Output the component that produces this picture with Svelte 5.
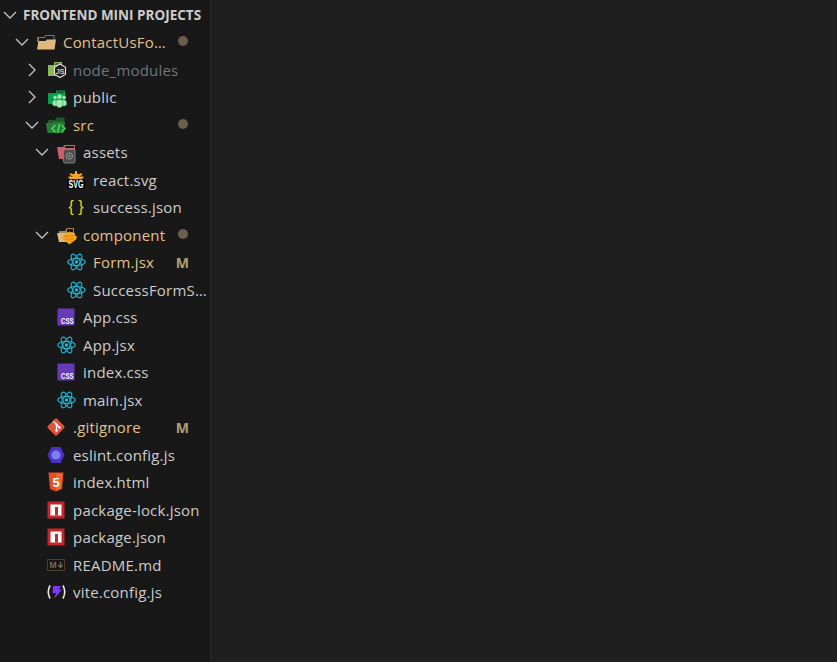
<script>
  const rows = [
    { name: "node_modules", depth: 2, open: false, icon: "node", dim: true },
    { name: "public", depth: 2, open: false, icon: "public" },
    { name: "src", depth: 2, open: true, icon: "src", mod: true, dot: true },
    { name: "assets", depth: 3, open: true, icon: "assets" },
    { name: "react.svg", depth: 4, icon: "svg" },
    { name: "success.json", depth: 4, icon: "json" },
    { name: "component", depth: 3, open: true, icon: "component", mod: true, dot: true },
    { name: "Form.jsx", depth: 4, icon: "react", mod: true, badge: "M" },
    { name: "SuccessFormSubmit.jsx", depth: 4, icon: "react" },
    { name: "App.css", depth: 3, icon: "css" },
    { name: "App.jsx", depth: 3, icon: "react" },
    { name: "index.css", depth: 3, icon: "css" },
    { name: "main.jsx", depth: 3, icon: "react" },
    { name: ".gitignore", depth: 2, icon: "git", mod: true, badge: "M" },
    { name: "eslint.config.js", depth: 2, icon: "eslint" },
    { name: "index.html", depth: 2, icon: "html" },
    { name: "package-lock.json", depth: 2, icon: "npm" },
    { name: "package.json", depth: 2, icon: "npm" },
    { name: "README.md", depth: 2, icon: "md" },
    { name: "vite.config.js", depth: 2, icon: "vite" },
  ];
</script>

{#snippet chevron(open)}
  <svg class="chev" width="16" height="16" viewBox="0 0 16 16" fill="none" stroke="#c5c5c5" stroke-width="1.300">
    {#if open}
      <path d="M2 5 8 11l6-6" />
    {:else}
      <path d="M5 2l6 6-6 6" />
    {/if}
  </svg>
{/snippet}

{#snippet icon(kind)}
  {#if kind === "root"}
    <svg width="22" height="22" viewBox="1 0 22 22">
      <path d="M3 6h7l1.500-2H20.500v7H3z" fill="#8d7350" />
      <path d="M11.500 5H19.500v6H11z" fill="#181818" />
      <path d="M5 7h6l1-1h7v5H5z" fill="#181818" />
      <path d="M4.500 10h7l1.500-1.500h9L20.500 18.500H3z" fill="#e0b781" />
    </svg>
  {:else if kind === "node"}
    <svg width="22" height="22" viewBox="1 0 22 22">
      <path d="M4 6h6V3h8v14H4z" fill="#8cb855" />
      <path d="M11 4h6v2h-6z" fill="#4d6b2f" />
      <path d="M16 5 21.500 8.200v7.100L16 18.500l-5.500-3.200V8.200z" fill="#1c1c1c" stroke="#e6e6e6" stroke-width="1.100" />
      <text x="16" y="14.800" class="tiny" fill="#c8c8c8" text-anchor="middle" font-size="7.500">JS</text>
    </svg>
  {:else if kind === "public"}
    <svg width="22" height="22" viewBox="1 0 22 22">
      <path d="M4 7h8V4.500h9V18H4z" fill="#0a9e4a" />
      <path d="M13 5.500h7V7h-7z" fill="#0a5f31" />
      <g fill="#a6e8b4" stroke="#0a9e4a" stroke-width="0.500">
        <circle cx="11" cy="11.500" r="2" />
        <circle cx="20" cy="11.500" r="2" />
        <path d="M8.500 19v-3q0-2 2.500-2h9q2.500 0 2.500 2v3l-2 1H10.500z" />
        <circle cx="15.500" cy="10.500" r="2.500" />
        <path d="M12 19v-3q0-2.500 3.500-2.500T19 16v3l-2 2.500h-3z" />
      </g>
    </svg>
  {:else if kind === "src"}
    <svg width="22" height="22" viewBox="1 0 22 22">
      <path d="M4 6h7l1.500-2.500H20.500V9H4z" fill="#1f5a2a" />
      <path d="M2 9h7l1-1h11l-1.500 11H3.500z" fill="#2a7a38" />
      <g fill="none" stroke="#3fe05a" stroke-width="1.500">
        <path d="M11.500 11 8 14.500l3.500 3.500M17.500 11l3.500 3.500-3.500 3.500M15.500 10 13.500 19" />
      </g>
    </svg>
  {:else if kind === "assets"}
    <svg width="22" height="22" viewBox="1 0 22 22">
      <path d="M3 6h6l1.500-2H21v14H5z" fill="#c9606c" />
      <path d="M11 5h9v2h-9z" fill="#181818" />
      <rect x="9.500" y="8.500" width="11.500" height="13.500" rx="1.500" fill="#4d4d4d" stroke="#7f7f7f" />
      <circle cx="15.250" cy="15" r="3" fill="none" stroke="#a9a9a9" stroke-width="1.300" stroke-dasharray="1.400 0.800" />
      <circle cx="15.250" cy="15" r="0.900" fill="#a9a9a9" />
    </svg>
  {:else if kind === "component"}
    <svg width="22" height="22" viewBox="1 0 22 22">
      <path d="M5 7h6l1.500-3H20v5H5z" fill="#a48659" />
      <path d="M13 5h6v3h-6z" fill="#181818" />
      <path d="M3 9h18l-2 9H5z" fill="#e0b781" />
      <path d="M15.500 7.500 23 12.500l-1 3-6.500 5-6.500-5-1-3z" fill="#f5a11e" />
      <path d="M10 12h11M11 15h9" stroke="#d9840f" stroke-width="0.900" />
    </svg>
  {:else if kind === "svg"}
    <svg width="22" height="22" viewBox="0 0 22 22">
      <g stroke="#f7a32b" stroke-width="2">
        <path d="M11 2v8M5 5l12 5M17 5 5 10M3.500 8.500h15" />
      </g>
      <circle cx="11" cy="7.500" r="3.200" fill="#f7a32b" />
      <rect x="2.500" y="10.500" width="17" height="9.500" rx="1.500" fill="#000" />
      <text x="3.500" y="18.800" class="tiny" fill="#fff" font-size="10.500" textLength="15" lengthAdjust="spacingAndGlyphs">SVG</text>
    </svg>
  {:else if kind === "json"}
    <span class="braces">{"{ }"}</span>
  {:else if kind === "react"}
    <svg width="19" height="18" viewBox="0 0 19 18" fill="none" stroke="#1ab8d6" stroke-width="1.150">
      <ellipse cx="9.500" cy="9" rx="8.800" ry="3.500" />
      <ellipse cx="9.500" cy="9" rx="8.800" ry="3.500" transform="rotate(60 9.500 9)" />
      <ellipse cx="9.500" cy="9" rx="8.800" ry="3.500" transform="rotate(120 9.500 9)" />
      <circle cx="9.500" cy="9" r="1.800" fill="#1ab8d6" stroke="none" />
    </svg>
  {:else if kind === "css"}
    <svg width="18" height="18" viewBox="0 0 18 18">
      <rect x="0.500" y="0.500" width="17" height="17" rx="1" fill="#673ab7" />
      <text x="4" y="16" class="tiny" fill="#fff" font-size="8.500" textLength="12.500" lengthAdjust="spacingAndGlyphs">CSS</text>
    </svg>
  {:else if kind === "git"}
    <svg width="18" height="18" viewBox="0 0 18 18">
      <rect x="2.500" y="2.500" width="13" height="13" rx="1.500" fill="#e0533b" transform="rotate(45 9 9)" />
      <path d="M6.500 3.500 9.500 6.500v6M9.500 6.500l3 3" stroke="#fff" stroke-width="1.200" fill="none" />
      <circle cx="9.500" cy="6.500" r="1.200" fill="#fff" />
      <circle cx="9.500" cy="12.500" r="1.200" fill="#fff" />
      <circle cx="12.500" cy="9.500" r="1.200" fill="#fff" />
    </svg>
  {:else if kind === "eslint"}
    <svg width="18" height="18" viewBox="0 0 18 18">
      <path d="M0.500 9 4.500 1h9l4 8-4 8h-9z" fill="#4b32c3" />
      <circle cx="9" cy="9" r="4.600" fill="#8080f2" />
    </svg>
  {:else if kind === "html"}
    <svg width="18" height="20" viewBox="0 0 18 20">
      <path d="M1.500 0.500h15L15 17 9 19.500 3 17z" fill="#e44d26" />
      <path d="M9 1.500h6.500L14.200 16.200 9 18.300z" fill="#f16529" />
      <text x="9" y="14.500" class="tiny" fill="#fff" text-anchor="middle" font-size="13">5</text>
    </svg>
  {:else if kind === "npm"}
    <svg width="18" height="18" viewBox="0 0 18 18">
      <rect x="0.500" y="0.500" width="17" height="17" fill="#c5262b" />
      <rect x="3.500" y="3.500" width="11" height="11" fill="#fff" />
      <rect x="8" y="6" width="3" height="8.500" fill="#c5262b" />
    </svg>
  {:else if kind === "md"}
    <svg width="18" height="12" viewBox="0 0 18 12">
      <rect x="0.500" y="0.500" width="17" height="11" fill="none" stroke="#4a3d2c" />
      <text x="2.500" y="9.300" class="tiny" fill="#7d6a4d" font-size="8.500">M</text>
      <path d="M13.500 3v4.500M11.500 6l2 2.500 2-2.500" stroke="#7d6a4d" stroke-width="1.300" fill="none" />
    </svg>
  {:else if kind === "vite"}
    <svg width="21" height="18" viewBox="0 0 21 18">
      <path d="M4 2.500Q0.500 9 4 15.500M17 2.500Q20.500 9 17 15.500" fill="none" stroke="#e8e8e8" stroke-width="1.600" />
      <path d="M7 3h8l-2 3.500h3L8.500 15.500 10 10H6.500z" fill="#7c3aed" />
    </svg>
  {/if}
{/snippet}

<div class="window">
  <aside class="explorer">
    <header class="section">
      {@render chevron(true)}
      <span class="section-title">FRONTEND MINI PROJECTS</span>
    </header>

    <div class="row" style="--depth: 1">
      <span class="twistie">{@render chevron(true)}</span>
      <span class="icon">{@render icon("root")}</span>
      <span class="label mod">ContactUsFormSubmit</span>
      <span class="dot"></span>
    </div>

    {#each rows as row}
      <div class="row" style="--depth: {row.depth}">
        <span class="twistie">
          {#if row.open !== undefined}{@render chevron(row.open)}{/if}
        </span>
        <span class="icon">{@render icon(row.icon)}</span>
        <span class="label" class:mod={row.mod} class:dim={row.dim}>{row.name}</span>
        {#if row.dot}<span class="dot"></span>{/if}
        {#if row.badge}<span class="badge">{row.badge}</span>{/if}
      </div>
    {/each}
  </aside>
  <main class="editor"></main>
</div>

<style>
  :global(body) {
    margin: 0;
    background: #1f1f1f;
  }

  .window {
    display: flex;
    height: 662px;
    font-family: "Open Sans", "Noto Sans", sans-serif;
  }

  .explorer {
    width: 210px;
    flex-shrink: 0;
    background: #181818;
    border-right: 1px solid #2b2b2b;
    overflow: hidden;
  }

  .editor {
    flex: 1;
    background: #1f1f1f;
  }

  .section {
    display: flex;
    align-items: center;
    height: 28.500px;
    padding: 1px 0 0 2px;
    gap: 5px;
    box-sizing: border-box;
  }

  .section-title {
    font-size: 13.500px;
    font-weight: 700;
    color: #cccccc;
    white-space: nowrap;
  }

  .row {
    display: flex;
    align-items: center;
    height: 27.500px;
    padding-left: calc(3px + var(--depth) * 10px);
  }

  .twistie {
    width: 18px;
    flex-shrink: 0;
    display: flex;
    justify-content: center;
  }

  .chev {
    display: block;
  }

  .icon {
    width: 30px;
    margin-right: 2px;
    flex-shrink: 0;
    display: flex;
    justify-content: center;
    align-items: center;
  }

  .icon svg {
    display: block;
    overflow: visible;
  }

  .braces {
    color: #e8d21d;
    font-size: 16px;
    font-family: "Liberation Sans", sans-serif;
    line-height: 18px;
    white-space: pre;
  }

  .tiny {
    font-family: "Liberation Sans", sans-serif;
    font-weight: 700;
  }

  .label {
    flex: 1;
    min-width: 0;
    font-size: 15px;
    letter-spacing: 0.200px;
    color: #cccccc;
    white-space: nowrap;
    overflow: hidden;
    text-overflow: ellipsis;
  }

  .label.mod {
    color: #e2c08d;
  }

  .label.dim {
    color: #6e7681;
  }

  .dot {
    width: 10px;
    height: 10px;
    border-radius: 50%;
    background: #6b5e4a;
    margin: 0 22px 2px 10px;
    flex-shrink: 0;
  }

  .badge {
    font-size: 14px;
    font-weight: 700;
    color: #b39d78;
    margin: 0 21px 0 6px;
    flex-shrink: 0;
  }
</style>
